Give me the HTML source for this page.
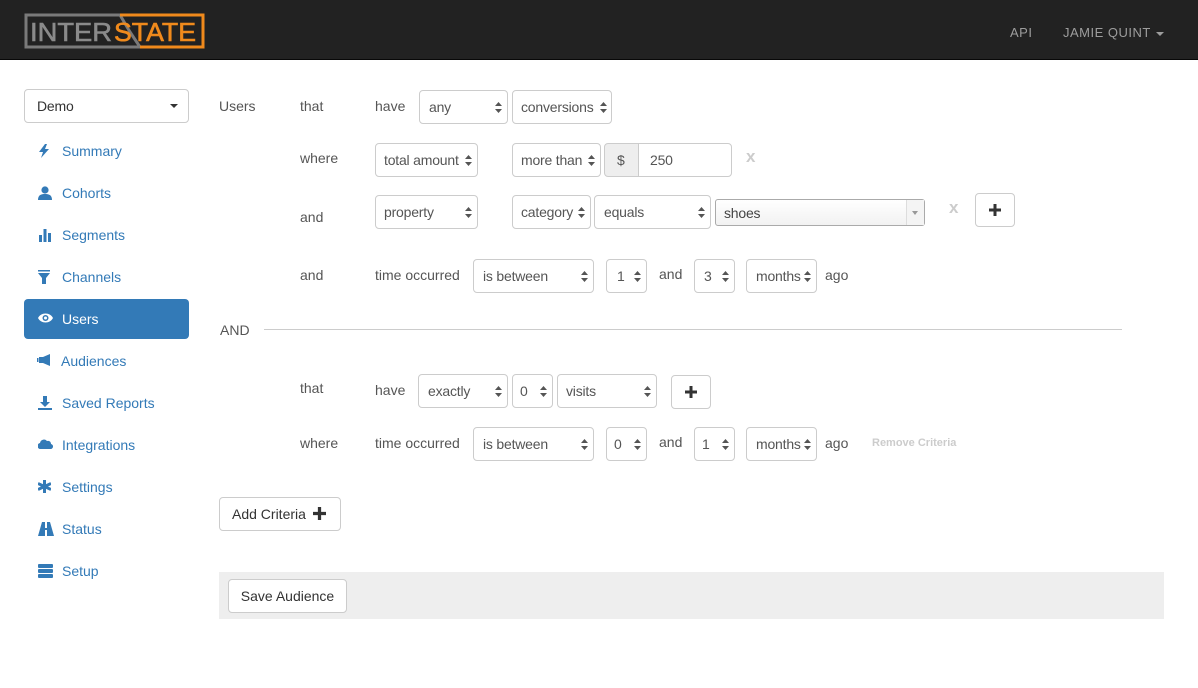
<!DOCTYPE html>
<html><head><meta charset="utf-8"><style>
*{box-sizing:border-box;margin:0;padding:0}
body{width:1198px;height:688px;background:#fff;font-family:"Liberation Sans",sans-serif;font-size:14px;color:#555;position:relative;overflow:hidden}
.nav{position:absolute;left:0;top:0;width:1198px;height:60px;background:#222;border-bottom:1px solid #080808}
.a{position:absolute}
.t{position:absolute;line-height:20px;white-space:nowrap}
.s{position:absolute;border:1px solid #ccc;border-radius:4px;height:34px;line-height:32px;padding-left:9px;color:#555;background:#fff;white-space:nowrap;letter-spacing:-0.2px}
.s svg{position:absolute;right:5px;top:11px}
.btn{position:absolute;border:1px solid #ccc;border-radius:4px;background:#fff;color:#333;line-height:32px;text-align:center;white-space:nowrap}
.side{position:absolute;left:24px;width:165px;height:40px;color:#337ab7;line-height:40px;padding-left:38px}
.side svg{position:absolute;left:14px;top:13px}
.side.act{background:#337ab7;color:#fff;border-radius:4px}
.x{position:absolute;color:#ccc;font-weight:bold;font-size:17px}
</style></head><body>
<div class="nav">
<svg class="a" style="left:24px;top:13px" width="182" height="36" viewBox="0 0 182 36">
<path d="M2 2H96L106 19L116 34H2Z" fill="none" stroke="#7a7a7a" stroke-width="3"/>
<path d="M96 2H179V34H116" fill="none" stroke="#f08a1c" stroke-width="3"/>
<text x="6" y="28" font-family="Liberation Sans" font-size="26" fill="#8a8a8a" textLength="82" lengthAdjust="spacingAndGlyphs" stroke="#8a8a8a" stroke-width="0.6">INTER</text>
<text x="90" y="28" font-family="Liberation Sans" font-size="26" fill="#f08a1c" textLength="82" lengthAdjust="spacingAndGlyphs" stroke="#f08a1c" stroke-width="0.6">STATE</text>
</svg>
<div class="t" style="left:1010px;top:23px;color:#9d9d9d;font-size:13px;letter-spacing:.5px">API</div>
<div class="t" style="left:1063px;top:23px;color:#9d9d9d;font-size:13px;letter-spacing:.5px">JAMIE QUINT</div>
<svg class="a" style="left:1156px;top:32px" width="8" height="5"><path d="M0 0H8L4 4Z" fill="#9d9d9d"/></svg>
</div>

<div class="s" style="left:24px;top:89px;width:165px;color:#333;padding-left:12px">Demo<svg width="8" height="5" style="top:14px;right:10px"><path d="M0 0H8L4 4Z" fill="#333"/></svg></div>

<div class="side" style="top:131px"><svg width="12" height="14" viewBox="0 0 12 14"><path d="M7 0L1 8H5L3 14L11 5H7L9 0Z" fill="#337ab7"/></svg>Summary</div>
<div class="side" style="top:173px"><svg width="14" height="14" viewBox="0 0 14 14"><circle cx="7" cy="4" r="3.6" fill="#337ab7"/><path d="M0 14C0 9 3 8 7 8S14 9 14 14Z" fill="#337ab7"/></svg>Cohorts</div>
<div class="side" style="top:215px"><svg width="14" height="14" viewBox="0 0 14 14"><rect x="1" y="7" width="3" height="7" fill="#337ab7"/><rect x="5.5" y="1" width="3" height="13" fill="#337ab7"/><rect x="10" y="5" width="3" height="9" fill="#337ab7"/></svg>Segments</div>
<div class="side" style="top:257px"><svg width="12" height="14" viewBox="0 0 12 14"><rect x="0" y="0" width="12" height="1.5" fill="#337ab7"/><path d="M0 3H12L8 8V14H4V8Z" fill="#337ab7"/></svg>Channels</div>
<div class="side act" style="top:299px"><svg width="15" height="12" viewBox="0 0 15 12"><path d="M0 6C3 0 12 0 15 6C12 12 3 12 0 6Z" fill="#fff"/><circle cx="7.5" cy="6" r="3" fill="#337ab7"/><circle cx="7.5" cy="6" r="1.5" fill="#fff"/></svg>Users</div>
<div class="side" style="top:341px;padding-left:37px"><svg width="15" height="13" viewBox="0 0 15 13" style="left:13px"><rect x="0" y="4" width="1.5" height="4" fill="#337ab7"/><path d="M2 3H6L13 0V12L6 9H2Z" fill="#337ab7"/></svg>Audiences</div>
<div class="side" style="top:383px"><svg width="14" height="14" viewBox="0 0 14 14"><path d="M5 0H9V6H12L7 11L2 6H5Z" fill="#337ab7"/><rect x="0" y="12" width="14" height="2" fill="#337ab7"/></svg>Saved Reports</div>
<div class="side" style="top:425px"><svg width="15" height="11" viewBox="0 0 15 11"><path d="M3 11A3 3 0 0 1 2 5A4 4 0 0 1 9 3A3 3 0 0 1 13 6A2.5 2.5 0 0 1 12 11Z" fill="#337ab7"/></svg>Integrations</div>
<div class="side" style="top:467px"><svg width="13" height="13" viewBox="0 0 13 13"><g stroke="#337ab7" stroke-width="3"><path d="M6.5 0V13M0 3.5L13 9.5M0 9.5L13 3.5"/></g></svg>Settings</div>
<div class="side" style="top:509px"><svg width="16" height="14" viewBox="0 0 16 14"><path d="M4 0H7V14H0Z M9 0H12L16 14H9Z" fill="#337ab7"/><rect x="7" y="6" width="2" height="2" fill="#337ab7"/></svg>Status</div>
<div class="side" style="top:551px"><svg width="15" height="14" viewBox="0 0 15 14"><rect x="0" y="0" width="15" height="4" rx="1" fill="#337ab7"/><rect x="0" y="5" width="15" height="4" rx="1" fill="#337ab7"/><rect x="0" y="10" width="15" height="4" rx="1" fill="#337ab7"/></svg>Setup</div>

<svg width="0" height="0" style="position:absolute"><defs><g id="ud"><path d="M3.5 0L7 4H0Z M0 7H7L3.5 11Z" fill="#555"/></g></defs></svg>

<div class="t" style="left:219px;top:96px">Users</div>
<div class="t" style="left:300px;top:96px">that</div>
<div class="t" style="left:375px;top:96px">have</div>
<div class="s" style="left:419px;top:90px;width:89px">any<svg width="7" height="11"><use href="#ud"/></svg></div>
<div class="s" style="left:512px;top:90px;width:100px;padding-left:8px">conversions<svg width="7" height="11" style="right:4px"><use href="#ud"/></svg></div>

<div class="t" style="left:300px;top:148px">where</div>
<div class="s" style="left:375px;top:143px;width:103px;padding-left:8px">total amount<svg width="7" height="11"><use href="#ud"/></svg></div>
<div class="s" style="left:512px;top:143px;width:89px;padding-left:8px">more than<svg width="7" height="11"><use href="#ud"/></svg></div>
<div class="s" style="left:604px;top:143px;width:35px;background:#eee;border-radius:4px 0 0 4px;padding-left:12px">$</div>
<div class="s" style="left:638px;top:143px;width:94px;border-radius:0 4px 4px 0;padding-left:11px">250</div>
<div class="x" style="left:746px;top:147px">x</div>

<div class="t" style="left:300px;top:207px">and</div>
<div class="s" style="left:375px;top:195px;width:103px;padding-left:8px">property<svg width="7" height="11"><use href="#ud"/></svg></div>
<div class="s" style="left:512px;top:195px;width:79px;padding-left:8px">category<svg width="7" height="11"><use href="#ud"/></svg></div>
<div class="s" style="left:594px;top:195px;width:117px">equals<svg width="7" height="11"><use href="#ud"/></svg></div>
<div class="s" style="left:715px;top:199px;width:210px;height:27px;line-height:26px;border-radius:3px;border-color:#aaa;background:linear-gradient(#fff,#f2f2f2);padding-left:8px;color:#444">shoes<span style="position:absolute;right:0;top:0;width:18px;height:25px;border-left:1px solid #ddd;background:#f4f4f4"></span><svg width="6" height="4" style="right:6px;top:11px"><path d="M0 0H6L3 4Z" fill="#999"/></svg></div>
<div class="x" style="left:949px;top:198px">x</div>
<div class="btn" style="left:975px;top:193px;width:40px;height:34px"><svg width="12" height="12" style="margin-top:10px" viewBox="0 0 12 12"><path d="M4.5 0H7.5V4.5H12V7.5H7.5V12H4.5V7.5H0V4.5H4.5Z" fill="#333"/></svg></div>

<div class="t" style="left:300px;top:265px">and</div>
<div class="t" style="left:375px;top:265px">time occurred</div>
<div class="s" style="left:473px;top:259px;width:121px">is between<svg width="7" height="11"><use href="#ud"/></svg></div>
<div class="s" style="left:606px;top:259px;width:41px;padding-left:10px">1<svg width="7" height="11"><use href="#ud"/></svg></div>
<div class="t" style="left:659px;top:264px">and</div>
<div class="s" style="left:694px;top:259px;width:41px;padding-left:9px">3<svg width="7" height="11"><use href="#ud"/></svg></div>
<div class="s" style="left:746px;top:259px;width:71px">months<svg width="7" height="11"><use href="#ud"/></svg></div>
<div class="t" style="left:825px;top:265px">ago</div>

<div class="t" style="left:220px;top:320px">AND</div>
<div class="a" style="left:264px;top:329px;width:858px;height:1px;background:#ccc"></div>

<div class="t" style="left:300px;top:378px">that</div>
<div class="t" style="left:375px;top:380px">have</div>
<div class="s" style="left:418px;top:374px;width:90px">exactly<svg width="7" height="11"><use href="#ud"/></svg></div>
<div class="s" style="left:512px;top:374px;width:41px;padding-left:7px">0<svg width="7" height="11"><use href="#ud"/></svg></div>
<div class="s" style="left:557px;top:374px;width:100px;padding-left:8px">visits<svg width="7" height="11"><use href="#ud"/></svg></div>
<div class="btn" style="left:671px;top:375px;width:40px;height:34px"><svg width="12" height="12" style="margin-top:10px" viewBox="0 0 12 12"><path d="M4.5 0H7.5V4.5H12V7.5H7.5V12H4.5V7.5H0V4.5H4.5Z" fill="#333"/></svg></div>

<div class="t" style="left:300px;top:433px">where</div>
<div class="t" style="left:375px;top:433px">time occurred</div>
<div class="s" style="left:473px;top:427px;width:121px">is between<svg width="7" height="11"><use href="#ud"/></svg></div>
<div class="s" style="left:606px;top:427px;width:41px;padding-left:7px">0<svg width="7" height="11"><use href="#ud"/></svg></div>
<div class="t" style="left:659px;top:432px">and</div>
<div class="s" style="left:694px;top:427px;width:41px;padding-left:7px">1<svg width="7" height="11"><use href="#ud"/></svg></div>
<div class="s" style="left:746px;top:427px;width:71px">months<svg width="7" height="11"><use href="#ud"/></svg></div>
<div class="t" style="left:825px;top:433px">ago</div>
<div class="t" style="left:872px;top:433px;font-size:11px;font-weight:bold;color:#ccc">Remove Criteria</div>

<div class="btn" style="left:219px;top:497px;width:122px;height:34px;text-align:left;padding-left:12px">Add Criteria <svg width="13" height="13" viewBox="0 0 12 12" style="vertical-align:-1px;margin-left:3px"><path d="M4.5 0H7.5V4.5H12V7.5H7.5V12H4.5V7.5H0V4.5H4.5Z" fill="#333"/></svg></div>
<div class="a" style="left:219px;top:572px;width:945px;height:47px;background:#eee"></div>
<div class="btn" style="left:228px;top:579px;width:119px;height:34px">Save Audience</div>
</body></html>
